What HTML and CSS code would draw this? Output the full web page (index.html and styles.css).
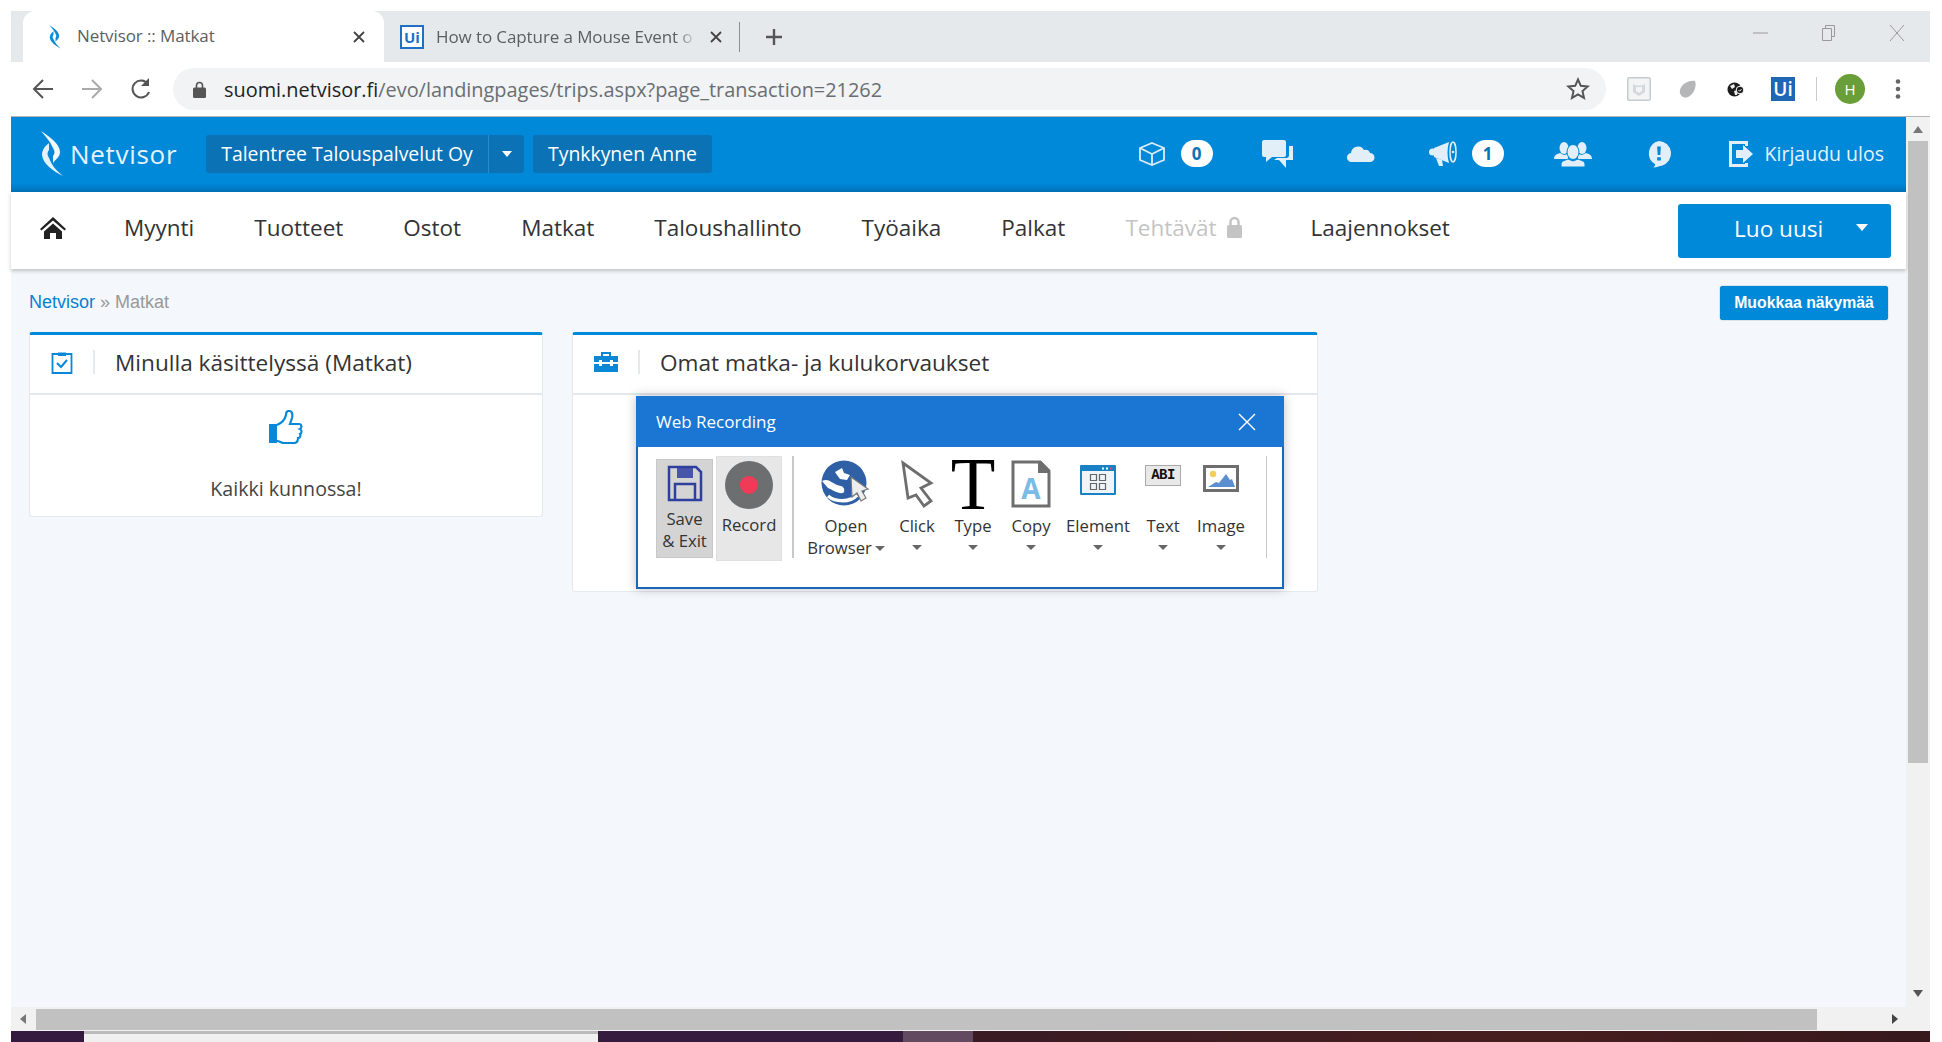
FILE: index.html

```html
<!doctype html>
<html>
<head>
<meta charset="utf-8">
<title>Netvisor :: Matkat</title>
<link rel="stylesheet" href="styles.css">
</head>
<body>
<div class="win">
	<div class="tabstrip">
		<div class="tab tab-on">
			<svg class="fav" width="14" height="24" viewBox="0 0 24 46"><path d="M1 0C10 6 20 13 20 21c0 5-4 7-7 11v-7c2-2 2-5 0-8C10 10 5 5 1 0z" fill="#0a8ad8"/><path d="M9 12v7c-2 2-2 5 0 8 3 8 8 13 14 18C13 40 3 33 2 24c0-5 3-9 7-12z" fill="#0a8ad8"/></svg>
			<span class="tab-text">Netvisor :: Matkat</span>
			<svg class="tab-x" width="12" height="12" viewBox="0 0 12 12"><path d="M1 1l10 10M11 1L1 11" stroke="#444" stroke-width="1.800"/></svg>
		</div>
		<div class="tab tab-off">
			<span class="ui-fav">Ui</span>
			<span class="tab-text tab-fade">How to Capture a Mouse Event o</span>
			<svg class="tab-x" width="12" height="12" viewBox="0 0 12 12"><path d="M1 1l10 10M11 1L1 11" stroke="#444" stroke-width="1.800"/></svg>
		</div>
		<div class="tab-plus">
			<svg width="20" height="20" viewBox="0 0 20 20"><path d="M10 2v16M2 10h16" stroke="#555" stroke-width="2.400"/></svg>
		</div>
		<div class="win-btns">
			<svg width="16" height="16" viewBox="0 0 16 16"><path d="M0 8h15" stroke="#999" stroke-width="1"/></svg>
			<svg width="16" height="18" viewBox="0 0 16 18"><path d="M1.500 4.500h9v12h-9zM4.500 4V1.500h9v11H11" fill="none" stroke="#999"/></svg>
			<svg width="16" height="18" viewBox="0 0 16 18"><path d="M1 1l14 16M15 1L1 17" stroke="#999" stroke-width="1"/></svg>
		</div>
	</div>
	<div class="toolbar">
		<div class="nav-btns">
			<svg width="22" height="22" viewBox="0 0 22 22"><path d="M21 11H3M11 2l-9 9 9 9" fill="none" stroke="#555" stroke-width="2"/></svg>
			<svg width="22" height="22" viewBox="0 0 22 22"><path d="M1 11h18M11 2l9 9-9 9" fill="none" stroke="#aaa" stroke-width="2"/></svg>
			<svg width="22" height="24" viewBox="0 0 22 24"><path d="M19 15a8.500 8.500 0 1 1-1-8" fill="none" stroke="#555" stroke-width="2"/><path d="M19 1v8h-8z" fill="#555"/></svg>
		</div>
		<div class="omnibox">
			<svg class="lock" width="13" height="17" viewBox="0 0 13 17"><path d="M3.500 7V4.500a3 3 0 0 1 6 0V7" fill="none" stroke="#555" stroke-width="1.600"/><rect y="6.500" width="13" height="10.500" rx="1.500" fill="#555"/></svg>
			<span class="url"><b>suomi.netvisor.fi</b>/evo/landingpages/trips.aspx?page_transaction=21262</span>
			<svg class="star" width="24" height="24" viewBox="0 0 24 24"><path d="M12 2.500l2.800 6.300 6.900.7-5.200 4.600 1.500 6.800-6-3.500-6 3.500 1.500-6.800-5.200-4.600 6.900-.7z" fill="none" stroke="#555" stroke-width="2"/></svg>
		</div>
		<div class="ext-icons">
			<svg class="ext-pocket" width="24" height="24" viewBox="0 0 24 24"><rect x=".75" y=".75" width="22.500" height="22.500" rx="1.500" fill="#f2f4f5" stroke="#c6cbd0" stroke-width="1.500"/><path d="M6 7l3 1.500h6L18 7v8l-6 4-6-4zM9 10v4l3 2 3-2v-4z" fill="#d3d8dc" fill-rule="evenodd"/></svg>
			<svg class="ext-blob" width="17" height="18" viewBox="0 0 17 18"><path d="M16 1c2 5-1 13-7 16-5 2-9-2-8-7C2 5 9 0 16 1z" fill="#b4b6b8"/></svg>
			<svg class="ext-globe" width="17" height="15" viewBox="0 0 17 15"><circle cx="7.500" cy="7.500" r="7" fill="#1c1c1c"/><path d="M3 4l4-2 1 3-3 2zM7 9l4-1-1 5-2 0z" fill="#eee"/><circle cx="13" cy="8" r="3.800" fill="#1c1c1c" stroke="#fff"/><path d="M11.500 8l1.200 1.200 1.800-2" fill="none" stroke="#fff"/></svg>
			<span class="ui-ext">Ui</span>
			<i class="ext-sep"></i>
			<span class="avatar">H</span>
			<svg class="dots" width="6" height="20" viewBox="0 0 6 20"><circle cx="3" cy="2.500" r="2.300" fill="#666"/><circle cx="3" cy="10" r="2.300" fill="#666"/><circle cx="3" cy="17.500" r="2.300" fill="#666"/></svg>
		</div>
	</div>
	<div class="page">
		<div class="main">
			<div class="head">
				<svg class="logo" width="24" height="46" viewBox="0 0 24 46"><path d="M1 0C10 6 20 13 20 21c0 5-4 7-7 11v-7c2-2 2-5 0-8C10 10 5 5 1 0z" fill="#f2f9fd"/><path d="M9 12v7c-2 2-2 5 0 8 3 8 8 13 14 18C13 40 3 33 2 24c0-5 3-9 7-12z" fill="#e3f1fb"/></svg>
				<span class="brand">Netvisor</span>
				<div class="co-btn"><span class="co-name">Talentree Talouspalvelut Oy</span><span class="co-drop"><i class="caret"></i></span></div>
				<div class="user-btn">Tynkkynen Anne</div>
				<div class="head-right">
					<svg class="hi hi-cube" width="26" height="24" viewBox="0 0 26 24"><path d="M13 1l12 5v12l-12 5-12-5V6zM1 6l12 6 12-6M13 12v11" fill="none" stroke="#dcedf9" stroke-width="1.800"/></svg>
					<span class="badge">0</span>
					<svg class="hi hi-chat" width="32" height="28" viewBox="0 0 32 28"><path d="M2 0h20a2 2 0 0 1 2 2v13a2 2 0 0 1-2 2H10l-6 5v-5H2a2 2 0 0 1-2-2V2a2 2 0 0 1 2-2z" fill="#e3eff8"/><path d="M27 6h4v14h-7v8l-7-8h-5l3-2h10c2-1 2-2 2-4z" fill="#e3eff8"/></svg>
					<svg class="hi hi-cloud" width="28" height="16" viewBox="0 0 28 16"><path d="M5 16a4.500 4.500 0 0 1-1-9 7 7 0 0 1 13-3 5 5 0 0 1 6 3 4.500 4.500 0 0 1 0 9z" fill="#e3eff8"/></svg>
					<svg class="hi hi-mega" width="28" height="25" viewBox="0 0 28 25"><circle cx="3.500" cy="11" r="3.500" fill="#e3eff8"/><path d="M5 7l15-6c-2 7-2 14 0 21L5 16z" fill="#e3eff8"/><path d="M7 17l6 2 1 6h-4z" fill="#e3eff8"/><ellipse cx="24" cy="11" rx="3" ry="10" fill="#0088d9" stroke="#e3eff8" stroke-width="1.500"/><circle cx="24" cy="11" r="1.300" fill="#e3eff8"/></svg>
					<span class="badge badge-b">1</span>
					<svg class="hi hi-users" width="38" height="26" viewBox="0 0 38 26"><ellipse cx="10" cy="7" rx="4.500" ry="6" fill="#e3eff8"/><ellipse cx="28" cy="7" rx="4.500" ry="6" fill="#e3eff8"/><path d="M0 18c0-4 3-5 6-6l4 2 4-1v5zM38 18c0-4-3-5-6-6l-4 2-4-1v5z" fill="#e3eff8"/><ellipse cx="19" cy="11" rx="6" ry="7.500" stroke="#0088d9" fill="#e3eff8"/><path d="M7 26v-3c0-3 5-4 7-5l5 2 5-2c2 1 7 2 7 5v3z" stroke="#0088d9" fill="#e3eff8"/></svg>
					<svg class="hi hi-alert" width="28" height="30" viewBox="0 0 30 30"><path d="M15 1a13.500 13.500 0 0 1 3 26.500c-3 0-5 2-9 2 1-1 2-2 2-3.500A13.500 13.500 0 0 1 15 1z" fill="#e3eff8"/><path d="M13 7h4l-.6 9h-2.800zM13 18.500h4v3.500h-4z" fill="#0088d9"/></svg>
					<svg class="hi hi-out" width="26" height="30" viewBox="0 0 26 30"><path d="M20 2H1v26h19v-4h-3v1H4V5h13v2h3z" fill="#e3eff8"/><path d="M8 11h7V6l10 9-10 9v-5H8z" fill="#e3eff8"/></svg>
					<span class="logout">Kirjaudu ulos</span>
				</div>
			</div>
			<div class="menu">
				<svg class="home" width="26" height="22" viewBox="0 0 26 22"><path d="M13 0L0 12l1.500 1.500L13 3.500l11.500 10L26 12zM4 14.500V22h6v-6h6v6h6v-7.500L13 6.500z" fill="#222"/></svg>
				<span class="m-item">Myynti</span>
				<span class="m-item">Tuotteet</span>
				<span class="m-item">Ostot</span>
				<span class="m-item">Matkat</span>
				<span class="m-item">Taloushallinto</span>
				<span class="m-item">Työaika</span>
				<span class="m-item">Palkat</span>
				<span class="m-item m-off">Tehtävät
					<svg width="15" height="22" viewBox="0 0 15 22"><path d="M3.500 10V6a4 4 0 0 1 8 0v4" fill="none" stroke="#c4c4c4" stroke-width="2.500"/><rect y="9" width="15" height="13" rx="1.500" fill="#c4c4c4"/></svg>
				</span>
				<span class="m-item">Laajennokset</span>
				<div class="new-btn"><span>Luo uusi</span><i class="caret caret-big"></i></div>
			</div>
			<div class="content">
				<div class="crumb-row">
					<div class="crumb"><a>Netvisor</a> » Matkat</div>
					<div class="edit-btn">Muokkaa näkymää</div>
				</div>
				<div class="cards">
					<div class="card card-a">
						<div class="card-head">
							<svg width="22" height="24" viewBox="0 0 22 24"><path d="M7 4H1.500v19h19V4H15" fill="none" stroke="#0a88d8" stroke-width="1.800"/><path d="M7 2.500h8V6H7z" fill="#0a88d8"/><path d="M6 13l4 4 6-7" fill="none" stroke="#0a88d8" stroke-width="2"/></svg>
							<i class="card-sep"></i>
							<span class="card-title">Minulla käsittelyssä (Matkat)</span>
						</div>
						<div class="card-body">
							<svg width="36" height="34" viewBox="0 0 36 34"><path d="M1 14h8v19H1z" fill="#0a88d8"/><path d="M9 15c5-2 8-6 9-10 0-3 1-4 3-4 3 0 4 3 3 7l-2 6h9c3 0 3 4 1 5 2 1 2 4 0 5 1 2 0 4-2 4 0 3-1 5-4 5H16c-3 0-4-2-7-2" fill="none" stroke="#0a88d8" stroke-width="2.200"/></svg>
							<p class="ok-text">Kaikki kunnossa!</p>
						</div>
					</div>
					<div class="card card-b">
						<div class="card-head">
							<svg width="24" height="20" viewBox="0 0 24 20"><path d="M8 4V1h8v3" fill="none" stroke="#0a88d8" stroke-width="2"/><path d="M0 4h24v6h-5V8h-3v2H8V8H5v2H0zM0 12h5v2h3v-2h8v2h3v-2h5v8H0z" fill="#0a88d8"/></svg>
							<i class="card-sep"></i>
							<span class="card-title">Omat matka- ja kulukorvaukset</span>
						</div>
					</div>
				</div>
				<div class="rec">
					<div class="rec-title"><span>Web Recording</span>
						<svg width="18" height="18" viewBox="0 0 18 18"><path d="M1 1l16 16M17 1L1 17" stroke="#fff" stroke-width="1.400"/></svg>
					</div>
					<div class="rec-body">
						<div class="r-save">
							<svg width="36" height="37" viewBox="0 0 36 37"><path d="M2 2h27l5 5v28H2z" fill="none" stroke="#2f3fa0" stroke-width="2.500"/><path d="M10 2h16v11H10z" fill="#2f3fa0" opacity=".85"/><path d="M8 35V19h20v16" fill="none" stroke="#2f3fa0" stroke-width="2.500"/></svg>
							<span>Save<br>&amp; Exit</span>
						</div>
						<div class="r-rec">
							<svg width="48" height="48" viewBox="0 0 48 48"><circle cx="24" cy="24" r="24" fill="#6d6e70"/><circle cx="24" cy="24" r="9" fill="#ef3b57"/></svg>
							<span>Record</span>
						</div>
						<i class="r-sep"></i>
						<div class="tool t-open">
							<div class="ti"><svg width="50" height="46" viewBox="0 0 50 46"><circle cx="23" cy="23" r="22.500" fill="#2f5fa5"/><path d="M7 36c7 6 22 7 29-1" fill="none" stroke="#fff" stroke-width="3.500"/><path d="M1 21c7-4 11 4 19 5 4 1 4 6 2 7-5 1-10-3-15-5z" fill="#fff"/><path d="M14 12l7-4 2 5 6 2-3 5-7-1-3-4z" fill="#fff"/><path d="M30 17l1 20 5-4 4 8 5-3-4-7 6-2z" fill="#eee" stroke="#777" stroke-width="1.200"/></svg></div>
							<span>Open<br>Browser<i class="dn dn-in"></i></span>
						</div>
						<div class="tool t-click">
							<div class="ti"><svg width="34" height="48" viewBox="0 0 34 48"><path d="M3 3l28 20-10 5 10 13-7 5-8-11-8 3z" fill="#fff" stroke="#6e6e6e" stroke-width="2.800"/></svg></div>
							<span>Click</span><i class="dn"></i>
						</div>
						<div class="tool t-type">
							<div class="ti"><span class="big-t">T</span></div>
							<span>Type</span><i class="dn"></i>
						</div>
						<div class="tool t-copy">
							<div class="ti"><svg width="40" height="48" viewBox="0 0 40 48"><path d="M2 2h27l9 9v35H2z" fill="#fff" stroke="#6e6e6e" stroke-width="3"/><path d="M27 1h3l9 9v3H27z" fill="#6e6e6e"/><text x="20" y="39" text-anchor="middle" class="copy-a">A</text></svg></div>
							<span>Copy</span><i class="dn"></i>
						</div>
						<div class="tool t-element">
							<div class="ti ti-low"><svg width="36" height="30" viewBox="0 0 36 30"><rect width="36" height="30" rx="1" fill="#1a82c4"/><rect x="2" y="6" width="32" height="22" fill="#eef4f8"/><path d="M22 2.500h2v2h-2zM26 2.500h2v2h-2z" fill="#fff"/><path d="M30 2.500h2v2h-2z" fill="#ef3b57"/><path d="M10.500 9.500h6v6h-6zM19.500 9.500h6v6h-6zM10.500 18.500h6v6h-6zM19.500 18.500h6v6h-6z" fill="none" stroke="#666" stroke-width="1.200"/></svg></div>
							<span>Element</span><i class="dn"></i>
						</div>
						<div class="tool t-text">
							<div class="ti ti-low"><span class="abi">ABI</span></div>
							<span>Text</span><i class="dn"></i>
						</div>
						<div class="tool t-image">
							<div class="ti ti-low"><svg width="36" height="27" viewBox="0 0 36 27"><rect x="1.500" y="1.500" width="33" height="24" fill="#fff" stroke="#6e6e6e" stroke-width="3"/><circle cx="10" cy="9" r="3.200" fill="#f2cf5b"/><path d="M5 22l8-5 3 1 7-9 4 6 2-1 3 8z" fill="#5b8fd0"/></svg></div>
							<span>Image</span><i class="dn"></i>
						</div>
						<i class="r-sep r-sep-end"></i>
					</div>
				</div>
			</div>
		</div>
		<div class="vscroll">
			<i class="arr-up"></i>
			<div class="v-thumb"></div>
			<i class="arr-dn"></i>
		</div>
	</div>
	<div class="hscroll">
		<i class="arr-lt"></i>
		<div class="h-thumb"></div>
		<i class="arr-rt"></i>
	</div>
	<div class="taskbar">
		<i class="tb-a"></i><i class="tb-b"></i><i class="tb-c"></i><i class="tb-d"></i><i class="tb-e"></i>
	</div>
</div>
</body>
</html>
```

FILE: styles.css

```css
*{margin:0; padding:0; box-sizing:border-box; list-style:none;}
html,body{height:1042px; overflow:hidden; background:#fff;}
body{font-family:"Open Sans","Liberation Sans",sans-serif; color:#333;}
i{display:block; font-style:normal;}
svg{display:block; flex:none;}

.win{width:1919px; height:1031px; margin:11px 0 0 11px; display:flex; flex-direction:column;}

/* browser */
.tabstrip{height:51px; flex:none; background:#e6e9ec; display:flex; align-items:stretch; padding-left:12px;}
.tab{display:flex; align-items:center; font-size:17px; color:#5a5f63;}
.tab-on{width:361px; background:#fff; border-radius:12px 12px 0 0; padding:0 19px 0 25px;}
.tab-off{width:356px; padding-left:16px; padding-right:17px; border-right:1px solid #8b8f92; margin:11px 0 10px; height:30px;}
.fav{margin-right:15px;}
.tab-text{flex:1; white-space:nowrap; overflow:hidden; letter-spacing:-.1px; padding-bottom:2px;}
.tab-fade{margin-left:12px; margin-right:13px; -webkit-mask-image:linear-gradient(90deg,#000 92%,rgba(0,0,0,.25) 98%);}
.ui-fav{width:24px; height:24px; border:2px solid #1f6fc4; color:#1f6fc4; font-size:15px; font-weight:700; line-height:20px; text-align:center; background:#fff;}
.tab-plus{margin-left:24px; display:flex; align-items:center;}
.win-btns{margin-left:auto; display:flex; align-items:center; gap:52px; padding:0 25px 8px 0;}

.toolbar{height:55px; flex:none; background:#fff; border-bottom:1px solid #b5b5b5; display:flex; align-items:center;}
.nav-btns{width:162px; display:flex; align-items:center; gap:27px; padding-left:21px;}
.omnibox{width:1433px; height:42px; background:#f1f3f4; border-radius:21px; display:flex; align-items:center; padding:0 16px 0 20px;}
.lock{margin-right:18px;}
.url{flex:1; font-size:19.9px; color:#6a6e72; white-space:nowrap;}
.url b{font-weight:400; color:#222;}
.ext-icons{display:flex; align-items:center; padding-left:21px;}
.ext-blob{margin-left:28px;}
.ext-globe{margin-left:31px;}
.ui-ext{width:24px; height:24px; margin-left:27px; background:#1f66b5; color:#fff; font-size:19px; font-weight:600; line-height:24px; text-align:center;}
.ext-sep{width:1px; height:24px; background:#ccc; margin:0 18px 0 21px;}
.avatar{width:30px; height:30px; border-radius:50%; background:#6a9e38; color:#fff; font-size:15px; line-height:30px; text-align:center;}
.dots{margin-left:30px;}

/* page */
.page{flex:1; display:flex; min-height:0;}
.main{flex:1; display:flex; flex-direction:column; min-width:0;}

.head{height:75px; flex:none; background:linear-gradient(#0088d9 0,#0088d9 88%,#0072b8 100%); display:flex; align-items:center; padding:0 22px 2px 29px; color:#fff;}
.logo{margin-right:6px;}
.brand{font-size:26px; letter-spacing:.7px; color:#e6f3fc; width:136px;}
.co-btn{display:flex; height:38px; background:#0b72b5; border-radius:3px; font-size:19.4px; line-height:38px;}
.co-name{width:283px; text-align:center; border-right:1px solid #2a8ccc;}
.co-drop{width:35px; display:flex; align-items:center; justify-content:center;}
.caret{width:0; height:0; border:5px solid transparent; border-top:6px solid #fff; border-bottom:0;}
.user-btn{margin-left:9px; width:179px; height:38px; background:#0b72b5; border-radius:3px; font-size:19.4px; line-height:38px; text-align:center;}
.head-right{margin-left:auto; display:flex; align-items:center;}
.badge{width:32px; height:27px; border-radius:14px; background:#fff; color:#0b72b5; font-weight:700; font-size:17px; line-height:27px; text-align:center; margin-left:16px;}
.badge-b{margin-left:15px;}
.hi-chat{margin-left:49px;}
.hi-cloud{margin-left:53px;}
.hi-mega{margin-left:54px;}
.hi-users{margin-left:50px;}
.hi-alert{margin-left:53px;}
.hi-out{margin-left:55px;}
.logout{margin-left:11px; font-size:19.5px; color:#e6f3fc;}

.menu{height:77px; flex:none; background:#fff; box-shadow:0 2px 4px rgba(0,0,0,.22); display:flex; align-items:center; padding:0 15px 0 29px; position:relative; z-index:1;}
.home{margin-right:58px; margin-bottom:5px;}
.m-item{font-size:22.5px; color:#333; margin-right:60px; white-space:nowrap; display:flex; align-items:center; gap:10px; padding-bottom:7px;}
.m-off{color:#c4c4c4; margin-right:69px;}
.new-btn{margin-left:auto; width:213px; height:54px; background:#0088d9; border-radius:3px; color:#fff; font-size:22.6px; display:flex; align-items:center; padding:0 0 4px 56px;}
.caret-big{margin-left:33px; margin-top:-2px; border-width:6px; border-top-width:7px;}

.content{flex:1; background:#f4f7fb; padding:17px 18px 0 18px; position:relative;}
.crumb-row{display:flex; justify-content:space-between; align-items:flex-start; height:46px;}
.crumb{font:18px "Liberation Sans",sans-serif; color:#999; padding-top:6px;}
.crumb a{color:#0a7fd0;}
.edit-btn{width:168px; height:34px; background:#0088d9; border-radius:3px; color:#fff; font:bold 15.8px/34px "Liberation Sans",sans-serif; text-align:center; box-shadow:0 0 1px #055;}

.cards{display:flex; align-items:flex-start; gap:29px;}
.card{background:#fff; border:1px solid #e4e9ee; border-top:3px solid #0088d9; border-radius:3px;}
.card-a{width:514px; height:185px;}
.card-b{width:746px; height:260px;}
.card-head{height:60px; border-bottom:2px solid #e4e9ee; display:flex; align-items:center; padding:0 0 4px 21px; font-size:22.6px; color:#333;}
.card-sep{width:2px; height:24px; background:#e4e9ee; margin:0 20px;}
.card-title{white-space:nowrap;}
.card-body{display:flex; flex-direction:column; align-items:center; padding-top:15px;}
.ok-text{font-size:19.6px; color:#444; margin-top:31px;}

/* recorder */
.rec{position:absolute; left:625px; top:127px; width:648px; height:193px; background:#fff; border:2px solid #1a66b8; border-top:0; box-shadow:0 0 10px rgba(0,0,0,.25);}
.rec-title{height:51px; margin:0 -2px; background:#1a76d2; color:#fff; font-size:17px; display:flex; align-items:center; justify-content:space-between; padding:0 28px 0 20px;}
.rec-body{display:flex; align-items:flex-start; padding:9px 0 0 18px; font-size:16.7px; color:#333; line-height:22px; text-align:center;}
.r-save{width:57px; height:99px; margin-top:3px; background:#d4d4d4; border:1px solid #c8c8c8; display:flex; flex-direction:column; align-items:center; gap:6px; padding-top:5px;}
.r-rec{width:66px; height:105px; margin-left:3px; background:#e7e7e7; border:1px solid #e0e0e0; display:flex; flex-direction:column; align-items:center; gap:5px; padding-top:4px;}
.r-sep{width:2px; height:102px; background:#c8c8c8; margin:0 8px 0 10px;}
.r-sep-end{width:1px; margin:0 0 0 14px;}
.tool{display:flex; flex-direction:column; align-items:center; padding-top:4px;}
.ti{height:52px; display:flex; justify-content:center; margin-bottom:3px;}
.ti-low{padding-top:5px;}
.t-open{width:88px;}
.t-click{width:54px;}
.t-type{width:58px;}
.t-copy{width:58px;}
.t-element{width:76px;}
.t-text{width:54px;}
.t-image{width:62px;}
.dn{width:0; height:0; border:5px solid transparent; border-top:5px solid #666; border-bottom:0; margin-top:8px;}
.dn-in{display:inline-block; margin:0 0 2px 3px; vertical-align:middle;}
.big-t{font:73px/50px "Liberation Serif",serif; color:#000;}
.copy-a{font:bold 28px "Open Sans",sans-serif; fill:#7cbbe6;}
.abi{width:36px; height:21px; background:#e8e8e8; border:1px solid #aaa; font:bold 14px/19px "Liberation Mono",monospace; color:#111; letter-spacing:-.5px;}

/* scrollbars */
.vscroll{width:24px; flex:none; background:#f1f1f1; display:flex; flex-direction:column; align-items:center;}
.arr-up,.arr-dn{width:0; height:0; border:5px solid transparent;}
.arr-up{border-bottom:7px solid #777; border-top:0; margin-top:9px;}
.arr-dn{border-top:7px solid #555; border-bottom:0; margin-top:auto; margin-bottom:10px;}
.v-thumb{width:20px; height:622px; margin-top:8px; background:#c1c1c1;}
.hscroll{height:24px; flex:none; background:#f1f1f1; display:flex; align-items:flex-end; padding-bottom:1px; position:relative;}
.arr-lt,.arr-rt{width:0; height:0; border:5px solid transparent; position:absolute; top:7px;}
.arr-lt{left:9px; border-right:6px solid #777; border-left:0;}
.arr-rt{right:32px; border-left:6px solid #444; border-right:0;}
.h-thumb{width:1781px; height:21px; margin-left:25px; background:#c1c1c1;}
.taskbar{height:11px; flex:none; display:flex; margin-top:0;}
.tb-a{width:73px; background:#341a3f;}
.tb-b{width:514px; background:#f0f0f0; border-top:3px solid #bbb;}
.tb-c{width:305px; background:#351b3e;}
.tb-d{width:70px; background:#624b60;}
.tb-e{flex:1; background:linear-gradient(90deg,#3a1b24,#471e1e 60%,#36181d);}
```
